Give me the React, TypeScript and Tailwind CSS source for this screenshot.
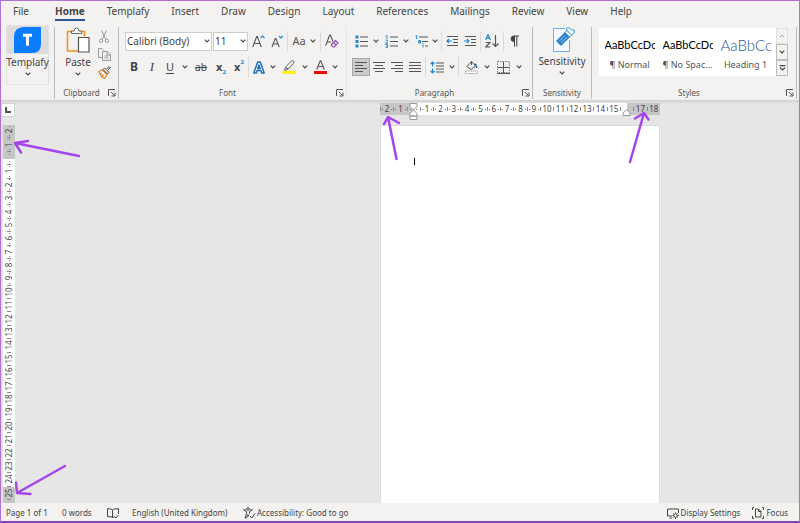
import type { ReactNode } from 'react';
import clsx from 'clsx';

const TABS = [
  'File',
  'Home',
  'Templafy',
  'Insert',
  'Draw',
  'Design',
  'Layout',
  'References',
  'Mailings',
  'Review',
  'View',
  'Help',
];

const H_MARKS = Array.from({ length: 21 }, (_, i) => i - 2);
const V_MARKS = Array.from({ length: 28 }, (_, i) => i - 2);

function Chevron() {
  return (
    <svg width="6" height="4" viewBox="0 0 6 4" fill="none" stroke="#444" strokeWidth="1.1">
      <path d="M0.7 0.7 3 3 5.3 0.7" />
    </svg>
  );
}

function MenuButton({ label, className }: { label: string; className: string }) {
  return (
    <button aria-label={label} className={clsx('flex h-5 items-center justify-center', className)}>
      <Chevron />
    </button>
  );
}

interface ToolProps {
  label: string;
  className?: string;
  active?: boolean;
  children: ReactNode;
}

function Tool({ label, className = 'w-[18px]', active, children }: ToolProps) {
  return (
    <button
      aria-label={label}
      aria-pressed={active}
      className={clsx(
        'flex h-[18px] shrink-0 items-center justify-center',
        className,
        active && 'border border-[#a9a7a5] bg-[#cdcbc9]'
      )}
    >
      {children}
    </button>
  );
}

function Divider() {
  return <span className="mx-px h-5 w-px shrink-0 bg-[#dcdad8]" />;
}

interface GroupProps {
  title: string;
  className?: string;
  launcher?: boolean;
  faint?: boolean;
  children: ReactNode;
}

function Group({ title, className, launcher = true, faint, children }: GroupProps) {
  return (
    <section
      aria-label={title}
      className={clsx(
        'flex shrink-0 flex-col border-r',
        faint ? 'border-[#e6e4e2]' : 'border-[#bdbbb9]',
        className
      )}
    >
      <div className="flex-1">{children}</div>
      <div className="flex h-3 items-center">
        <span className="flex-1 text-center text-[8px] leading-3 text-[#555]">{title}</span>
        {launcher && (
          <button aria-label={`${title} settings`} className="mr-[2px]">
            <svg width="8" height="8" viewBox="0 0 8 8" fill="none" stroke="#555" strokeWidth="1">
              <path d="M0.5 7V0.5H7M3 3l3.5 3.5M7 3.5V7H3.5" />
            </svg>
          </button>
        )}
      </div>
    </section>
  );
}

function AlignIcon({ rows }: { rows: [number, number][] }) {
  return (
    <svg width="12" height="12" viewBox="0 0 12 12" stroke="#555" strokeWidth="1">
      {rows.map(([x1, x2], i) => (
        <path key={i} d={`M${x1} ${i * 3 + 1.5}H${x2}`} />
      ))}
    </svg>
  );
}

function IndentIcon({ inward }: { inward?: boolean }) {
  return (
    <svg width="13" height="12" viewBox="0 0 13 12" fill="none" stroke="#555">
      <path d="M1 1.5h11M7 4.5h5M7 7.5h5M1 10.5h11" />
      <path stroke="#1e88d2" strokeWidth="1.2" d={inward ? 'M0 6h5M3 4l2 2-2 2' : 'M6 6H1M3 4 1 6l2 2'} />
    </svg>
  );
}

function Templafy() {
  return (
    <section aria-label="Templafy" className="w-[54px] shrink-0 border-r border-[#bdbbb9] pl-[5px]">
      <button className="-mt-[2px] flex h-[60px] w-[43px] flex-col items-center border border-[#e3e1df] text-[#444]">
        <span className="flex h-7 w-full shrink-0 items-center justify-center bg-[#dddcdb]">
          <svg width="27" height="26" viewBox="0 0 27 26">
            <path d="M10 0H27V17Q27 26 18 26H0V10Q0 0 10 0Z" fill="#0a7cff" />
            <path d="M9 8.2h9M13.5 8.2v10.5" stroke="#fff" strokeWidth="3" fill="none" />
          </svg>
        </span>
        <span className="text-[10px] leading-4">Templafy</span>
        <span className="mt-[2px]">
          <Chevron />
        </span>
      </button>
    </section>
  );
}

function ClipboardGroup() {
  return (
    <Group title="Clipboard" className="w-16">
      <div className="flex">
        <button className="flex w-[46px] flex-col items-center text-[#444]">
          <svg width="24" height="26" viewBox="0 0 24 26" fill="none">
            <path d="M6 4.5H1.5v19.5H12M14 4.5h4.5v5" stroke="#ee8f23" strokeWidth="1.5" />
            <path d="M5.5 6.5V4h2.5q.3-3 2.5-3t2.5 3h2.5v2.5Z" fill="#fff" stroke="#666" />
            <path d="M12.500 10.500h10.500v14.500H12.500Z" fill="#fff" stroke="#555" strokeWidth="1.2" />
          </svg>
          <span className="mt-px text-[10px] leading-4">Paste</span>
          <span className="mt-[2px]">
            <Chevron />
          </span>
        </button>
        <div className="flex flex-col">
          <Tool label="Cut" className="w-[6px]">
            <svg width="10" height="13" viewBox="0 0 10 13" className="shrink-0" fill="none" stroke="#9a9a9a">
              <path d="M2.5 0.5 7 9.5M7.5 0.5 3 9.5" />
              <circle cx="2.2" cy="10.8" r="1.6" />
              <circle cx="7.8" cy="10.8" r="1.6" />
            </svg>
          </Tool>
          <Tool label="Copy" className="w-[6px]">
            <svg width="13" height="13" viewBox="0 0 13 13" className="shrink-0" fill="none" stroke="#9a9a9a">
              <path d="M4.500 9.500h-4v-9h3.500l2 2" />
              <path d="M4.500 3.500h5l3 3v6h-8ZM9 3.500v3.500h3.500M6.500 8h4M6.500 10h4" />
            </svg>
          </Tool>
          <Tool label="Format Painter" className="w-[6px]">
            <svg width="13" height="13" viewBox="0 0 13 13" className="shrink-0" fill="none">
              <path d="M1 5.500 4.500 4l4.500 4.500-2.500 4q-4-2-5.500-7Z" fill="#fff" stroke="#e67e22" strokeWidth="1.2" />
              <path d="M2 8 4 7M4 10.500l1.500-2" stroke="#e67e22" strokeWidth="1.3" />
              <path d="m5 3.500 4.500 4.500 1.500-1.500-1.800-1.800 3-3-1.200-1.200-3 3L6.500 2Z" fill="#f3f2f1" stroke="#444" />
            </svg>
          </Tool>
        </div>
      </div>
    </Group>
  );
}

function Combo({ label, value, className }: { label: string; value: string; className: string }) {
  return (
    <div className={clsx('relative', className)}>
      <select
        aria-label={label}
        defaultValue={value}
        className="block h-[19px] w-full appearance-none border border-[#d0cecc] bg-white px-px text-[10px] leading-4 text-[#444]"
      >
        <option>{value}</option>
      </select>
      <span className="pointer-events-none absolute inset-y-0 right-[2px] flex items-center">
        <Chevron />
      </span>
    </div>
  );
}

function FontGroup() {
  return (
    <Group title="Font" className="w-[228px]" faint>
      <div className="flex h-[26px] items-center pt-[2px] pl-[6px]">
        <Combo label="Font" value="Calibri (Body)" className="mr-px w-[87px]" />
        <Combo label="Font size" value="11" className="w-[35px]" />
        <Tool label="Grow font" className="w-5">
          <svg width="13" height="13" viewBox="0 0 13 13" fill="none" stroke="#555" strokeWidth="1.1">
            <path d="M0.7 12 4.7 1.5h.6L9.300 12M2.200 8.500h5.600" />
            <path d="m8.500 3 2-2 2 2" stroke="#1e88d2" />
          </svg>
        </Tool>
        <Tool label="Shrink font" className="w-[18px]">
          <svg width="13" height="13" viewBox="0 0 13 13" fill="none" stroke="#555" strokeWidth="1.1">
            <path d="M1 12 4.300 3.500h.6L8.200 12M2.200 9h4.800" />
            <path d="m8 1 2 2 2-2" stroke="#1e88d2" />
          </svg>
        </Tool>
        <Divider />
        <Tool label="Change case" className="w-[30px] gap-1 text-[11px] text-[#555]">
          Aa
          <Chevron />
        </Tool>
        <Divider />
        <Tool label="Clear formatting" className="w-5">
          <svg width="14" height="14" viewBox="0 0 14 14" fill="none">
            <path d="M0.700 11.500 4.700 1h.6L8 7.500M2.200 8h4" stroke="#555" strokeWidth="1.1" />
            <path d="m6.500 10.500 4-4 2.500 2.500-4 4H8l-1.500-1.500ZM8.500 8.500l2.500 2.500" stroke="#9b40b5" strokeWidth="1.1" />
          </svg>
        </Tool>
      </div>
      <div className="flex h-7 items-center pl-[6px] text-[#444]">
        <Tool label="Bold">
          <b className="text-[12px]">B</b>
        </Tool>
        <Tool label="Italic">
          <i className="font-[Liberation_Serif,serif] text-[13px]">I</i>
        </Tool>
        <Tool label="Underline">
          <span className="text-[11px] underline underline-offset-2">U</span>
        </Tool>
        <MenuButton label="Underline style" className="w-3" />
        <Tool label="Strikethrough" className="w-5">
          <span className="text-[10px] line-through">ab</span>
        </Tool>
        <Tool label="Subscript" className="w-5">
          <b className="text-[11px]">x</b>
          <span className="self-end text-[6px] leading-2 font-bold text-[#1e88d2]">2</span>
        </Tool>
        <Tool label="Superscript" className="w-4">
          <b className="text-[11px]">x</b>
          <span className="self-start text-[6px] leading-2 font-bold text-[#1e88d2]">2</span>
        </Tool>
        <Divider />
        <Tool label="Text effects" className="w-[18px]">
          <svg width="12" height="13" viewBox="0 0 12 13" fill="#fff" stroke="#1a6fc0" strokeWidth="1.5" strokeLinejoin="round">
            <path d="M0.800 12 4.700 1h2.600l3.900 11H8.700l-.8-2.500H4.100L3.300 12ZM4.800 7.500h2.400L6 4Z" />
          </svg>
        </Tool>
        <MenuButton label="Text effects menu" className="w-[10px]" />
        <Tool label="Highlight" className="w-[22px]">
          <svg width="14" height="14" viewBox="0 0 14 14" fill="none">
            <path d="M0.500 11h13v3h-13Z" fill="#fff200" />
            <path d="m4 6.500 5.500-5.500q1-.8 2 0t0 2L7 8.500H4.500ZM4 7l-2 3h3l1-1.500" stroke="#666" />
          </svg>
        </Tool>
        <MenuButton label="Highlight colour" className="w-[10px]" />
        <Tool label="Font colour" className="w-5">
          <svg width="13" height="14" viewBox="0 0 13 14" fill="none">
            <path d="M0 11h13v3H0Z" fill="#f00505" />
            <path d="M2.700 9.500 6.200 0.700h.6l3.500 8.800M4 6.500h5" stroke="#555" strokeWidth="1.1" />
          </svg>
        </Tool>
        <MenuButton label="Font colour menu" className="w-[10px]" />
      </div>
    </Group>
  );
}

function ParagraphGroup() {
  return (
    <Group title="Paragraph" className="w-[186px]">
      <div className="flex h-[26px] items-center pt-[2px] pl-[5px]">
        <Tool label="Bullets">
          <svg width="13" height="13" viewBox="0 0 13 13" stroke="#555">
            <path d="M5 2h8M5 6.500h8M5 11h8" />
            <path d="M0.500 2h3M0.500 6.500h3M0.500 11h3" stroke="#1e88d2" strokeWidth="3" />
          </svg>
        </Tool>
        <MenuButton label="Bullet library" className="w-3" />
        <Tool label="Numbering">
          <svg width="13" height="13" viewBox="0 0 13 13" fill="none" stroke="#555">
            <path d="M5 2h8M5 6.500h8M5 11h8" />
            <path d="M0.500 1 2 .5V4M0.500 5.200h2v1.300l-2 1.700h2.300M.5 9.500h2v3h-2M1 11h1.500" stroke="#1e88d2" strokeWidth=".9" />
          </svg>
        </Tool>
        <MenuButton label="Numbering library" className="w-3" />
        <Tool label="Multilevel list">
          <svg width="13" height="13" viewBox="0 0 13 13" fill="none" stroke="#555">
            <path d="M4 2h9M7 6.500h6M10 11h3" />
            <path d="M0.500 1 1.700.5V4M3.500 5.500h2v2.500h-2V6.500h2M8 9.500v3M8 8v.7" stroke="#1e88d2" />
          </svg>
        </Tool>
        <MenuButton label="List library" className="w-[10px]" />
        <Divider />
        <Tool label="Decrease indent">
          <IndentIcon />
        </Tool>
        <Tool label="Increase indent">
          <IndentIcon inward />
        </Tool>
        <Divider />
        <Tool label="Sort" className="w-5">
          <svg width="14" height="14" viewBox="0 0 14 14" fill="none">
            <path d="M0.500 6 3 .5 5.500 6M1.500 4.200h3" stroke="#1e88d2" strokeWidth="1.2" />
            <path d="M0.800 8.500h4l-4 4.500h4.400M10.500 1v11.500M7.500 9.500l3 3 3-3" stroke="#555" strokeWidth="1.2" />
          </svg>
        </Tool>
        <Divider />
        <Tool label="Show marks">
          <svg width="9" height="12" viewBox="0 0 9 12" fill="none" stroke="#444">
            <path d="M4.500 1H3.800a2.700 2.700 0 0 0 0 5.500h.7Z" fill="#444" />
            <path d="M4.500 1v10.500M6.800 1v10.500M4 1h5" />
          </svg>
        </Tool>
      </div>
      <div className="flex h-7 items-center pl-[5px]">
        <Tool label="Align left" active>
          <AlignIcon rows={[[0, 12], [0, 8], [0, 12], [0, 8]]} />
        </Tool>
        <Tool label="Centre">
          <AlignIcon rows={[[0, 12], [2, 10], [0, 12], [2, 10]]} />
        </Tool>
        <Tool label="Align right">
          <AlignIcon rows={[[0, 12], [4, 12], [0, 12], [4, 12]]} />
        </Tool>
        <Tool label="Justify">
          <AlignIcon rows={[[0, 12], [0, 12], [0, 12], [0, 12]]} />
        </Tool>
        <Divider />
        <Tool label="Line spacing" className="w-5">
          <svg width="14" height="13" viewBox="0 0 14 13" fill="none" stroke="#555">
            <path d="M6 2h8M6 5h8M6 8h8M6 11h8" />
            <path d="M2.500 1v4.500M.5 3l2-2 2 2M2.500 7.500V12M.5 10l2 2 2-2" stroke="#1e88d2" strokeWidth="1.2" />
          </svg>
        </Tool>
        <MenuButton label="Line spacing options" className="w-[10px]" />
        <Divider />
        <Tool label="Shading" className="w-[22px]">
          <svg width="13" height="14" viewBox="0 0 13 14" fill="none">
            <path d="M0.500 11h12v2.500h-12Z" fill="#fff" stroke="#bbb" />
            <path d="m2 6.500 4.500-5 4 4.500-4.500 3.500ZM6.500 1.500V5" stroke="#555" />
            <path d="M9.500 4q2 .5 2 4" stroke="#1a6fc0" strokeWidth="1.5" />
          </svg>
        </Tool>
        <MenuButton label="Shading colour" className="w-[10px]" />
        <Tool label="Borders" className="w-[22px]">
          <svg width="13" height="13" viewBox="0 0 13 13" fill="none" stroke="#777">
            <path d="M0.500 0.500h12v11H.5Z" strokeDasharray="1.500 1" />
            <path d="M6.500 1v11M1 6.500h11M0 12.500h13" stroke="#555" />
          </svg>
        </Tool>
        <MenuButton label="Border options" className="w-[10px]" />
      </div>
    </Group>
  );
}

function SensitivityGroup() {
  return (
    <Group title="Sensitivity" className="w-[59px]" launcher={false}>
      <button className="flex w-full flex-col items-center text-[#444]">
        <svg width="22" height="25" viewBox="0 0 22 25" className="ml-1" fill="none" stroke="#2b88cf">
          <path d="M12 1.500H0.500V24.500h16V13" fill="#f4faff" stroke="#6bb1e4" />
          <path d="m3.500 14 8.500-8.500 4.500 4.500L8 18.500Z" fill="#2b7cc4" />
          <path d="m6 14.500 6-6M8 16l6-6" stroke="#9dcdf0" />
          <path d="m12 5.500 2-2q-1.500-2 .5-2.700T17.500 2l1 1q2.500-1 3 1t-2 3l-3 3Z" fill="#fff" />
          <path d="m14 3.500 4.500 4.500" />
        </svg>
        <span className="mt-px text-[10px] leading-4">Sensitivity</span>
        <span className="mt-[2px]">
          <Chevron />
        </span>
      </button>
    </Group>
  );
}

const STYLES = [
  { name: '¶ Normal', sample: 'text-[11px] text-black' },
  { name: '¶ No Spac...', sample: 'text-[11px] text-black' },
  { name: 'Heading 1', sample: 'text-[15px] font-light text-[#2f5496]' },
];

function StylesGroup() {
  return (
    <Group title="Styles" className="mr-[2px] grow">
      <div className="mt-px ml-[7px] flex h-12 w-[189px] bg-white">
        <div className="flex flex-1 justify-center">
          {STYLES.map((style) => (
            <button key={style.name} className="flex w-[58px] flex-col items-center px-1 pt-[7px]">
              <span
                className={clsx(
                  'h-5 w-full overflow-hidden text-left font-[Lato,sans-serif] leading-5 whitespace-nowrap',
                  style.sample
                )}
              >
                AaBbCcDc
              </span>
              <span className="mt-[2px] text-[9px] leading-4 whitespace-nowrap text-[#555]">{style.name}</span>
            </button>
          ))}
        </div>
        <div className="flex w-3 flex-col bg-[#f3f2f1]">
          <button aria-label="Previous styles" className="flex flex-1 items-center justify-center border border-[#e1dfdd]">
            <svg width="6" height="4" viewBox="0 0 6 4" fill="none" stroke="#aaa">
              <path d="M1 3 3 1l2 2" />
            </svg>
          </button>
          <button aria-label="Next styles" className="flex flex-1 items-center justify-center border border-[#bdbbb9]">
            <Chevron />
          </button>
          <button aria-label="More styles" className="flex flex-1 items-center justify-center border border-[#bdbbb9]">
            <svg width="7" height="6" viewBox="0 0 7 6" fill="none" stroke="#444" strokeWidth="1.2">
              <path d="M0.500 0.700h6M1 2.700 3.500 5 6 2.700" />
            </svg>
          </button>
        </div>
      </div>
    </Group>
  );
}

function Dot() {
  return <span className="size-px shrink-0 bg-[#777]" />;
}

// One centimetre: a tick on the leading edge, then the number between two dots
function RulerMark({ value, last, vertical }: { value: number; last: number; vertical?: boolean }) {
  const n = Math.abs(value);
  const turning = value === 0 || (value === last && !vertical);
  const outside = value < 0 || value > last;
  const single = n < 10;
  return (
    <span
      className={clsx(
        'flex flex-1 items-center text-[8px] leading-3 text-[#444]',
        vertical ? 'min-h-0 flex-col-reverse' : 'min-w-0',
        !turning && (outside ? 'bg-[#c6c6c6]' : 'bg-white'),
        value === 0 && 'from-[#c6c6c6] from-50% to-white to-50%',
        value === 0 && (vertical ? 'bg-linear-to-b' : 'bg-linear-to-r'),
        turning && value === last && 'bg-linear-to-r from-white from-50% to-[#c6c6c6] to-50%'
      )}
    >
      <span className={clsx('shrink-0 bg-[#888]', vertical ? 'h-px w-1' : 'h-1 w-px')} />
      <span
        className={clsx(
          'flex flex-1 items-center justify-around',
          vertical ? 'min-h-0 flex-col' : 'min-w-0'
        )}
      >
        {single && <Dot />}
        {!turning && (
          <span className={clsx('flex shrink-0 items-center justify-center', vertical && 'w-3', vertical && (single ? 'h-[5px]' : 'h-[9px]'))}>
            <span className={clsx(vertical && '-rotate-90')}>{n}</span>
          </span>
        )}
        {single && <Dot />}
      </span>
    </span>
  );
}

function VerticalRuler() {
  return (
    <div className="flex w-[14px] shrink-0 flex-col overflow-hidden">
      <button aria-label="Tab selector" className="mt-[3px] flex h-[14px] w-[14px] shrink-0 items-center justify-center border border-[#d5d5d5] bg-white">
        <svg width="6" height="6" viewBox="0 0 6 6" fill="none" stroke="#555" strokeWidth="2">
          <path d="M1 0v5h5" />
        </svg>
      </button>
      <div className="mt-2 ml-[2px] flex h-[375px] shrink-0 flex-col">
        {V_MARKS.map((v) => (
          <RulerMark key={v} value={v} last={24} vertical />
        ))}
      </div>
      <div className="ml-[2px] flex-1 bg-[#c6c6c6]" />
    </div>
  );
}

function HorizontalRuler() {
  return (
    <div className="relative flex h-3 w-[280px] shrink-0">
      {H_MARKS.map((v) => (
        <RulerMark key={v} value={v} last={16} />
      ))}
      <svg width="9" height="17" viewBox="0 0 9 17" className="absolute top-0 left-[29px]" fill="#fff" stroke="#999">
        <path d="M1 .5h7v3L4.500 7 1 3.500ZM1 13V10.500L4.500 7 8 10.500V13ZM1 13h7v3.500H1Z" />
      </svg>
      <svg width="9" height="7" viewBox="0 0 9 7" className="absolute top-[6px] left-[242px]" fill="#fff" stroke="#999">
        <path d="M1 6.500V4L4.500.7 8 4v2.500Z" />
      </svg>
    </div>
  );
}

function Workspace() {
  return (
    <main className="flex min-h-0 flex-1 bg-[#e6e6e6] shadow-[inset_0_2px_3px_#cfcfcf]">
      <VerticalRuler />
      <div className="flex min-w-0 flex-1 flex-col items-center pt-[3px] pl-[226px]">
        <HorizontalRuler />
        <div className="mt-[10px] w-[280px] flex-1 border-x border-t border-[#dadada] bg-white px-[33px] pt-8">
          <div role="textbox" aria-label="Document" className="h-2">
            <span className="block h-[7px] w-px bg-black" />
          </div>
        </div>
      </div>
    </main>
  );
}

function StatusBar() {
  return (
    <footer className="flex h-[18px] shrink-0 items-center bg-[#f3f2f1] pt-[2px] pl-[5px] pr-[11px] text-[8px] leading-4 whitespace-nowrap text-[#444]">
      <span className="w-14">Page 1 of 1</span>
      <span className="w-[45px]">0 words</span>
      <button aria-label="Proofing" className="w-[25px]">
        <svg width="12" height="11" viewBox="0 0 12 11" fill="none" stroke="#444">
          <path d="M5.500 9.500V2Q4.500.5.500.7v8H4q1 0 1.500 1.300.5-1 2-1.200M5.500 2Q6.500.5 11.500.7V6" />
          <path d="m7.500 8.500 1.500 1.500 2.500-3" />
        </svg>
      </button>
      <button className="w-[111px] text-left">English (United Kingdom)</button>
      <button className="flex items-center gap-px">
        <svg width="13" height="12" viewBox="0 0 13 12" fill="none" stroke="#444">
          <circle cx="5" cy="2" r="1.300" />
          <path d="M.7 2.500Q1.500 4 3.500 4.500v2L2 11h1.500L5 7.500M9.300 2.500Q8.500 4 6.500 4.500v2M.7 2.500 3 3.200M9.300 2.500 7 3.200M5 7.500l.8 2" />
          <path d="m7 9 1.800 2L12 6.500" />
        </svg>
        Accessibility: Good to go
      </button>
      <button className="ml-auto flex items-center gap-[2px]">
        <svg width="12" height="11" viewBox="0 0 12 11" fill="none" stroke="#444">
          <path d="M5 8H.5V1h11v4M2.500 10H5" />
          <circle cx="8.500" cy="7.500" r="1.800" />
          <path d="M8.500 4.500v1M8.500 9.500v1.500M5.500 7.500h1M10.500 7.500H12M6.500 5.500l.7.700M10.500 5.500l-.7.700M6.500 9.500l.7-.7M10.500 9.500l-.7-.7" />
        </svg>
        Display Settings
      </button>
      <button className="ml-3 flex items-center gap-[2px]">
        <svg width="12" height="12" viewBox="0 0 12 12" fill="none" stroke="#444">
          <path d="M3.500 2h3L9 4.500V10H3.500ZM6.500 2v2.500H9M2 .5H.5V3M10 .5h1.500V3M2 11.500H.5V9M10 11.500h1.500V9" />
        </svg>
        Focus
      </button>
    </footer>
  );
}

// Hand-drawn arrows pointing at the margin areas of both rulers
function Arrows() {
  return (
    <svg
      width="800"
      height="523"
      viewBox="0 0 800 523"
      className="pointer-events-none absolute -top-px -left-px z-20"
      fill="none"
      stroke="#a445ee"
      strokeWidth="2.5"
      strokeLinecap="round"
      strokeLinejoin="round"
    >
      <path d="M79 156 15 143M28 141 15 143l6 9.500" />
      <path d="M396.500 159 388 117M384 124l4-7 11 6" />
      <path d="m630 162 14-49M635 118.500l9-5.500 4.500 6.500" />
      <path d="M65 466 17 493M16 482.500 17 493l13.500 1" />
    </svg>
  );
}

export default function App() {
  return (
    <div className="relative flex h-screen flex-col overflow-hidden border border-b-2 border-[#b070d6] border-b-[#8443bd] bg-[#f3f2f1] font-[Noto_Sans,sans-serif]">
      <nav aria-label="Ribbon tabs" className="flex h-[22px] shrink-0 gap-[22px] pl-3 text-[10px] leading-5 text-[#444]">
        {TABS.map((tab) => (
          <button
            key={tab}
            className={clsx(
              'h-5',
              tab === 'File' && 'mr-1',
              tab === 'Home' && 'border-b-2 border-[#2b579a] font-bold'
            )}
          >
            {tab}
          </button>
        ))}
      </nav>
      <div className="z-10 flex h-[77px] shrink-0 pt-1 pb-px">
        <Templafy />
        <ClipboardGroup />
        <FontGroup />
        <ParagraphGroup />
        <SensitivityGroup />
        <StylesGroup />
      </div>
      <Workspace />
      <StatusBar />
      <Arrows />
    </div>
  );
}
